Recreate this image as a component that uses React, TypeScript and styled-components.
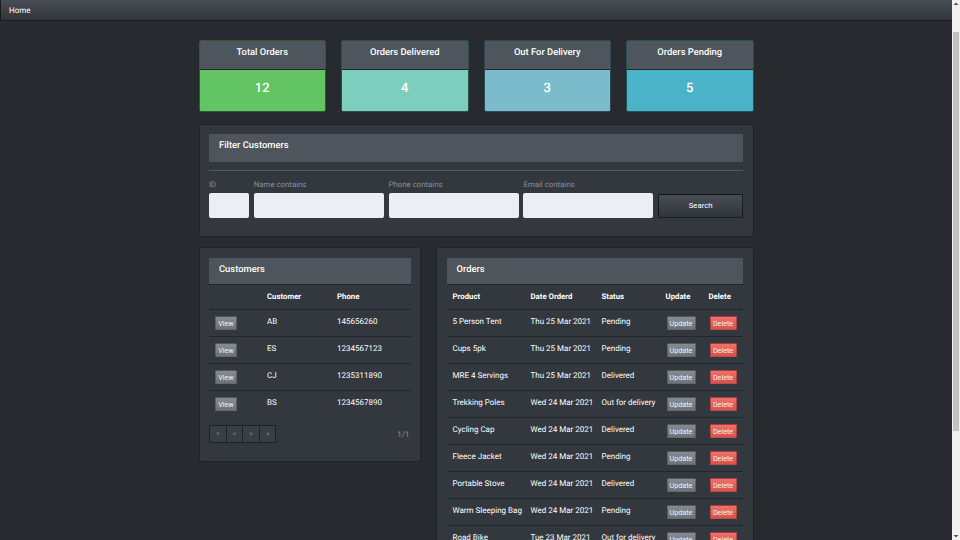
import React from 'react';
import styled, { createGlobalStyle } from 'styled-components';

const FONT = `Roboto, 'Liberation Sans', sans-serif`;

const GlobalStyle = createGlobalStyle`
  html, body {
    margin: 0;
    height: 100%;
    overflow: hidden;
    background: #272b30;
  }
  body {
    color: #fff;
    font-family: ${FONT};
    font-size: 8px;
    text-rendering: geometricPrecision;
  }
`;

const Shell = styled.div`
  display: flex;
  height: 100vh;
`;

const Page = styled.div`
  flex: 1;
  min-width: 0;
  overflow: hidden;
`;

const ScrollTrack = styled.div`
  width: 8px;
  flex: none;
  display: flex;
  flex-direction: column;
  background: #f1f1f1;
`;

const ScrollArrow = styled.svg`
  display: block;
  width: 8px;
  height: 8px;
  flex: none;
`;

const ScrollSpace = styled.div`
  flex: 1;
  padding: 24px 1px 101px;
  display: flex;
`;

const ScrollThumb = styled.div`
  flex: 1;
  background: #c1c1c1;
`;

const Navbar = styled.nav`
  height: 20px;
  display: flex;
  align-items: center;
  padding-left: 8px;
  background: linear-gradient(#484e55, #3a3f44 60%, #313539);
  border: 1px solid rgba(0, 0, 0, 0.6);
  border-width: 0 0 1px 1px;
  font-size: 8px;
`;

const Main = styled.main`
  width: 555px;
  margin: 0 auto;
  padding: 19px 0 24px;
`;

const StatRow = styled.section`
  display: grid;
  grid-template-columns: repeat(4, 1fr);
  gap: 15px;
  margin-bottom: 11.5px;
`;

const StatCard = styled.div<{ $edge: string }>`
  border: 1px solid ${p => p.$edge};
  border-radius: 2px;
  overflow: hidden;
  box-shadow: 0 0 1px #1f2226;
`;

const StatTitle = styled.div`
  height: 29px;
  padding-top: 5px;
  box-sizing: border-box;
  background: #4e555c;
  border-bottom: 1px solid #23272b;
  text-align: center;
  font-size: 9.4px;
  font-weight: 500;
  line-height: 13px;
`;

const StatValue = styled.div<{ $color: string }>`
  height: 41px;
  background: ${p => p.$color};
  text-align: center;
  font-size: 13px;
  font-weight: 500;
  line-height: 37px;
`;

const Panel = styled.section`
  background: #32383e;
  border: 1px solid #1f2226;
  border-radius: 2px;
  padding: 9.5px;
`;

const PanelTitle = styled.h2<{ $plain?: boolean }>`
  margin: 0;
  height: 27.5px;
  padding-left: 10px;
  box-sizing: border-box;
  background: #4e555c;
  border-bottom: 1px solid ${p => (p.$plain ? '#4e555c' : '#23272b')};
  font-size: 9.4px;
  font-weight: 500;
  line-height: 23px;
`;

const Divider = styled.hr`
  margin: 8px 0 8.5px;
  border: 0;
  border-top: 1px solid #565b60;
`;

const FilterForm = styled.form`
  display: grid;
  grid-template-columns: 40px repeat(3, 130px) 85px;
  column-gap: 4.8px;
  align-items: end;
  padding-bottom: 8px;
`;

const Field = styled.label`
  display: flex;
  flex-direction: column;
  gap: 3px;
  color: #8d9094;
  font-size: 7.8px;
  line-height: 11px;
`;

const TextInput = styled.input`
  box-sizing: border-box;
  width: 100%;
  height: 25px;
  border: 0;
  border-radius: 2px;
  background: #ebeef5;
`;

const SearchButton = styled.button`
  height: 23.5px;
  margin-bottom: 0.5px;
  border: 1px solid rgba(0, 0, 0, 0.6);
  border-radius: 1px;
  background: linear-gradient(#484e55, #3a3f44 60%, #313539);
  color: #fff;
  font: 400 7.8px ${FONT};
`;

const Columns = styled.div`
  display: grid;
  grid-template-columns: 222.5px 317.5px;
  gap: 15px;
  align-items: start;
  margin-top: 10.5px;
`;

const Table = styled.table`
  width: 100%;
  border-collapse: collapse;
  table-layout: fixed;
`;

const HeadCell = styled.th<{ $w?: number }>`
  box-sizing: border-box;
  width: ${p => (p.$w ? `${p.$w}px` : 'auto')};
  height: 24px;
  padding: 0 0 0 6px;
  text-align: left;
  font-size: 7.8px;
  font-weight: 700;
`;

const Cell = styled.td`
  box-sizing: border-box;
  height: 27px;
  padding: 0 0 3px 6px;
  border-top: 1px solid #23272b;
  font-size: 8px;
  white-space: nowrap;
`;

const ButtonCell = styled(Cell)`
  padding-bottom: 0;
  padding-top: 1px;
`;

const RowButton = styled.button<{ $danger?: boolean; $w: number; $indent?: boolean }>`
  display: block;
  width: ${p => p.$w}px;
  height: 14px;
  margin-left: ${p => (p.$indent ? '1px' : '0')};
  padding: 0;
  border: 1px solid rgba(0, 0, 0, 0.25);
  border-radius: 1px;
  background: ${p =>
    p.$danger
      ? 'linear-gradient(#f9736f, #ee5f5b 60%, #e4524e)'
      : 'linear-gradient(#8a9196, #7a8288 60%, #70787d)'};
  color: #fff;
  font: 400 7.2px ${FONT};
  opacity: 0.95;
`;

const PagerRow = styled.div`
  display: flex;
  justify-content: space-between;
  align-items: center;
  margin-top: 8px;
  padding-bottom: 8px;
`;

const Pager = styled.div`
  display: flex;
`;

const PageButton = styled.button`
  width: 17.6px;
  height: 18px;
  padding: 0;
  margin-left: -1px;
  border: 1px solid #1f2226;
  background: #3a3f44;
  color: #7a8288;
  font: 400 7px ${FONT};

  &:first-child {
    margin-left: 0;
  }
`;

const PageCount = styled.span`
  color: #8d9094;
  font-size: 8px;
  padding-right: 1px;
`;

const STATS = [
  { title: 'Total Orders', value: 12, color: '#62c462', edge: '#2f5a34' },
  { title: 'Orders Delivered', value: 4, color: '#7ccfbc', edge: '#2f4f4b' },
  { title: 'Out For Delivery', value: 3, color: '#7abccc', edge: '#2f4a52' },
  { title: 'Orders Pending', value: 5, color: '#4ab3c8', edge: '#24505c' },
];

const CUSTOMERS = [
  { name: 'AB', phone: '145656260' },
  { name: 'ES', phone: '1234567123' },
  { name: 'CJ', phone: '1235311890' },
  { name: 'BS', phone: '1234567890' },
];

const ORDERS = [
  { product: '5 Person Tent', date: 'Thu 25 Mar 2021', status: 'Pending' },
  { product: 'Cups 5pk', date: 'Thu 25 Mar 2021', status: 'Pending' },
  { product: 'MRE 4 Servings', date: 'Thu 25 Mar 2021', status: 'Delivered' },
  { product: 'Trekking Poles', date: 'Wed 24 Mar 2021', status: 'Out for delivery' },
  { product: 'Cycling Cap', date: 'Wed 24 Mar 2021', status: 'Delivered' },
  { product: 'Fleece Jacket', date: 'Wed 24 Mar 2021', status: 'Pending' },
  { product: 'Portable Stove', date: 'Wed 24 Mar 2021', status: 'Delivered' },
  { product: 'Warm Sleeping Bag', date: 'Wed 24 Mar 2021', status: 'Pending' },
  { product: 'Road Bike', date: 'Tue 23 Mar 2021', status: 'Out for delivery' },
];

const App: React.FC = () => (
  <Shell>
    <GlobalStyle />
    <Page>
      <Navbar>Home</Navbar>
      <Main>
        <StatRow>
          {STATS.map(stat => (
            <StatCard key={stat.title} $edge={stat.edge}>
              <StatTitle>{stat.title}</StatTitle>
              <StatValue $color={stat.color}>{stat.value}</StatValue>
            </StatCard>
          ))}
        </StatRow>

        <Panel>
          <PanelTitle $plain>Filter Customers</PanelTitle>
          <Divider />
          <FilterForm>
            <Field>
              ID
              <TextInput />
            </Field>
            <Field>
              Name contains
              <TextInput />
            </Field>
            <Field>
              Phone contains
              <TextInput />
            </Field>
            <Field>
              Email contains
              <TextInput />
            </Field>
            <SearchButton type="button">Search</SearchButton>
          </FilterForm>
        </Panel>

        <Columns>
          <Panel>
            <PanelTitle>Customers</PanelTitle>
            <Table>
              <thead>
                <tr>
                  <HeadCell $w={52} />
                  <HeadCell $w={70}>Customer</HeadCell>
                  <HeadCell>Phone</HeadCell>
                </tr>
              </thead>
              <tbody>
                {CUSTOMERS.map(customer => (
                  <tr key={customer.name}>
                    <ButtonCell>
                      <RowButton $w={22}>View</RowButton>
                    </ButtonCell>
                    <Cell>{customer.name}</Cell>
                    <Cell>{customer.phone}</Cell>
                  </tr>
                ))}
              </tbody>
            </Table>
            <PagerRow>
              <Pager>
                <PageButton>«</PageButton>
                <PageButton>&lt;</PageButton>
                <PageButton>&gt;</PageButton>
                <PageButton>»</PageButton>
              </Pager>
              <PageCount>1/1</PageCount>
            </PagerRow>
          </Panel>

          <Panel>
            <PanelTitle>Orders</PanelTitle>
            <Table>
              <thead>
                <tr>
                  <HeadCell $w={78}>Product</HeadCell>
                  <HeadCell $w={71}>Date Orderd</HeadCell>
                  <HeadCell $w={64}>Status</HeadCell>
                  <HeadCell $w={43}>Update</HeadCell>
                  <HeadCell>Delete</HeadCell>
                </tr>
              </thead>
              <tbody>
                {ORDERS.map(order => (
                  <tr key={order.product}>
                    <Cell>{order.product}</Cell>
                    <Cell>{order.date}</Cell>
                    <Cell>{order.status}</Cell>
                    <ButtonCell>
                      <RowButton $w={29} $indent>
                        Update
                      </RowButton>
                    </ButtonCell>
                    <ButtonCell>
                      <RowButton $w={27} $indent $danger>
                        Delete
                      </RowButton>
                    </ButtonCell>
                  </tr>
                ))}
              </tbody>
            </Table>
          </Panel>
        </Columns>
      </Main>
    </Page>
    <ScrollTrack>
      <ScrollArrow viewBox="0 0 8 8">
        <path d="M4 2.5 6.5 5h-5z" fill="#505050" />
      </ScrollArrow>
      <ScrollSpace>
        <ScrollThumb />
      </ScrollSpace>
      <ScrollArrow viewBox="0 0 8 8">
        <path d="M4 5.5 1.5 3h5z" fill="#505050" />
      </ScrollArrow>
    </ScrollTrack>
  </Shell>
);

export default App;
